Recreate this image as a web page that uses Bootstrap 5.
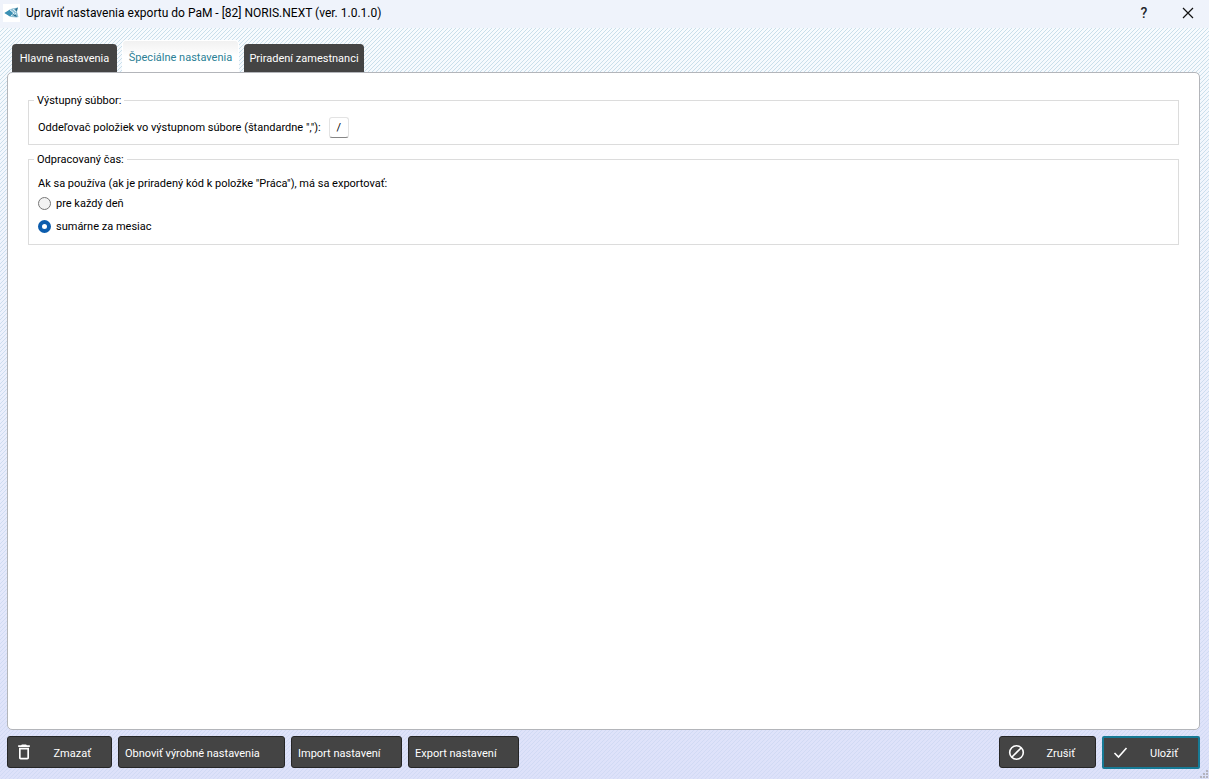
<!DOCTYPE html>
<html lang="sk">
<head>
<meta charset="utf-8">
<meta name="viewport" content="width=device-width, initial-scale=1">
<title>Upraviť nastavenia exportu do PaM</title>
<link href="https://cdn.jsdelivr.net/npm/bootstrap@5.3.0/dist/css/bootstrap.min.css" rel="stylesheet">
<style>
  body {
    font: 11px/16px Roboto, "Open Sans", sans-serif;
    color: #000;
    /* diagonal hatching over a pale vertical gradient */
    background:
      linear-gradient(to bottom, transparent, rgba(212, 216, 248, .75)),
      linear-gradient(135deg, #c9dfea 10%, #f8fcfe 11% 39%, #c9dfea 40% 60%, #f8fcfe 61% 89%, #c9dfea 90%) 0 0 / 4px 4px;
  }
  .title-bar { height: 28px; background: #eff3fb; font-size: 12px; padding: 0 12px 2px 3px; gap: 6px; }
  .title-btn { width: 18px; height: 18px; font-size: 14px; font-weight: 500; line-height: 18px; }
  .app-logo { background: #fff; }
  .dialog-body { padding: 0 9px 0 7px; }

  .nav-tabs { padding: 12px 5px 0; gap: 5px; border: 0; }
  .nav-tabs .nav-link {
    height: 28px; padding: 0; margin: 0; border: 0; border-radius: 4px 4px 0 0;
    background: #444; color: #fff; line-height: 30px; text-align: center;
  }
  .nav-tabs .nav-link.tab-main { width: 105px; }
  .nav-tabs .nav-link.tab-staff { width: 120px; }
  .nav-tabs .nav-link.active {
    width: 117px; height: 32px; color: #2b7f96; line-height: 34px;
    background: linear-gradient(#f1f1f1, #fff 50%); border: 1px solid #fff; border-bottom: 0;
  }

  .tab-panel { background: #fff; border: 1px solid #b3b5ba; border-radius: 5px; padding: 19px 20px; }
  .group-box { border: 1px solid #dcdcdc; padding: 0 9px 6px; min-width: 0; }
  .group-box > legend {
    float: none; width: auto; margin: 0 0 0 -4px; padding: 2px 3px 0;
    font-size: 11px; line-height: 14px;
  }
  .group-output { margin-bottom: 6px; }
  .group-body { padding-top: 9px; }
  .separator-input {
    width: 20px; height: 21px; padding: 0; font-size: 11px; text-align: center; color: #000;
    border: 1px solid #e3e3e3; border-bottom-color: #868686; border-radius: 3px;
  }
  .radio-row { height: 23px; gap: 5px; }
  .radio-row .form-check-input {
    width: 13px; height: 13px; margin: 0; border: 1px solid #777; background-color: #f3f3f3;
  }
  .radio-row .form-check-input:checked { border: 4px solid #0b5cad; background: #fff; }

  .action-bar { padding: 6px 0 10px; gap: 6px; }
  .btn-dark-flat {
    height: 32px; padding: 3px 20px 0 6px; font-size: 11px; line-height: 16px; border-radius: 3px;
    --bs-btn-color: #fff; --bs-btn-bg: #444; --bs-btn-border-color: #262626;
    --bs-btn-hover-color: #fff; --bs-btn-hover-bg: #555; --bs-btn-hover-border-color: #262626;
    display: flex; align-items: center; white-space: nowrap;
  }
  .btn-dark-flat svg { flex: none; margin-top: -3px; }
  .btn-w-export { width: 111px; }
  .btn-w-restore { width: 167px; }
  .btn-w-delete { width: 105px; }
  .btn-w-end { width: 97px; padding-left: 8px; }
  .btn-save { width: 98px; border: 2px solid #167a95; border-radius: 2px; height: 33px; }
  .size-grip { right: 0; bottom: 0; }
</style>
</head>
<body>
<div class="d-flex flex-column min-vh-100 position-relative">
  <header class="title-bar d-flex align-items-center">
    <svg class="app-logo" width="17" height="18" viewBox="0 0 17 18" aria-hidden="true">
      <path d="M1.500 9 9 4.500l6-1-1 4.500 1.500 5-2 .5L8 13z" fill="#8fbfd3"/>
      <path d="M1.500 9 7 5.500l3 3.500-3 3.500z" fill="#3a90b4"/>
      <path d="M7 6l4 3-3 3M10 5l3 3M10 12l3-3" stroke="#d6ecf3" fill="none"/>
      <path d="M12 5l3-1.500-1.500 4zM9 10l4 1 1 2-3-1z" fill="#256d8e"/>
    </svg>
    <span class="flex-grow-1">Upraviť nastavenia exportu do PaM - [82] NORIS.NEXT (ver. 1.0.1.0)</span>
    <button type="button" class="title-btn btn p-0 border-0 me-3" aria-label="Pomocník">?</button>
    <button type="button" class="title-btn btn p-0 border-0 ms-1 d-flex align-items-center justify-content-center" aria-label="Zavrieť">
      <svg width="12" height="12" viewBox="0 0 12 12"><path d="M1 1l10 10M11 1 1 11" stroke="#111" stroke-width="1.200"/></svg>
    </button>
  </header>

  <main class="dialog-body d-flex flex-column flex-grow-1">
    <ul class="nav nav-tabs align-items-end flex-nowrap" role="tablist">
      <li class="nav-item"><button type="button" class="nav-link tab-main text-nowrap" role="tab">Hlavné nastavenia</button></li>
      <li class="nav-item"><button type="button" class="nav-link active text-nowrap" role="tab" aria-selected="true">Špeciálne nastavenia</button></li>
      <li class="nav-item"><button type="button" class="nav-link tab-staff text-nowrap" role="tab">Priradení zamestnanci</button></li>
    </ul>

    <section class="tab-panel flex-grow-1">
      <fieldset class="group-box group-output">
        <legend>Výstupný súbbor:</legend>
        <div class="group-body d-flex align-items-center gap-2">
          <label for="separator">Oddeľovač položiek vo výstupnom súbore (štandardne ","):</label>
          <input id="separator" class="separator-input" type="text" value="/" maxlength="1">
        </div>
      </fieldset>
      <fieldset class="group-box">
        <legend>Odpracovaný čas:</legend>
        <p class="group-body mb-0">Ak sa používa (ak je priradený kód k položke "Práca"), má sa exportovať:</p>
        <div class="radio-row d-flex align-items-center">
          <input class="form-check-input" type="radio" name="period" id="daily">
          <label for="daily">pre každý deň</label>
        </div>
        <div class="radio-row d-flex align-items-center">
          <input class="form-check-input" type="radio" name="period" id="monthly" checked>
          <label for="monthly">sumárne za mesiac</label>
        </div>
      </fieldset>
    </section>

    <footer class="action-bar d-flex">
      <button type="button" class="btn btn-dark-flat btn-w-delete justify-content-between">
        <svg width="20" height="20" viewBox="0 0 24 24" fill="#fff" aria-hidden="true"><path fill-rule="evenodd" d="M6 19c0 1.100.9 2 2 2h8c1.100 0 2-.9 2-2V7H6zM8 9h8v10H8zm7.500-5-1-1h-5l-1 1H5v2h14V4z"/></svg>
        <span>Zmazať</span>
      </button>
      <button type="button" class="btn btn-dark-flat btn-w-restore">Obnoviť výrobné nastavenia</button>
      <button type="button" class="btn btn-dark-flat btn-w-export">Import nastavení</button>
      <button type="button" class="btn btn-dark-flat btn-w-export">Export nastavení</button>
      <button type="button" class="btn btn-dark-flat btn-w-end justify-content-between ms-auto">
        <svg width="17" height="17" viewBox="0 0 17 17" fill="none" stroke="#fff" stroke-width="1.600" aria-hidden="true"><circle cx="8.500" cy="8.500" r="6.800"/><path d="M13.300 3.700 3.700 13.300"/></svg>
        <span>Zrušiť</span>
      </button>
      <button type="submit" class="btn btn-dark-flat btn-w-end btn-save justify-content-between">
        <svg width="17" height="17" viewBox="0 0 17 17" fill="none" stroke="#fff" stroke-width="1.600" aria-hidden="true"><path d="M2.500 9l4 4L14.500 4"/></svg>
        <span>Uložiť</span>
      </button>
    </footer>
  </main>
  <svg class="size-grip position-absolute" width="9" height="9" viewBox="0 0 9 9" fill="#b4b4be" aria-hidden="true"><path d="M6 0h2v2H6zM3 3h2v2H3zM6 3h2v2H6zM0 6h2v2H0zM3 6h2v2H3zM6 6h2v2H6z"/></svg>
</div>
<script src="https://cdn.jsdelivr.net/npm/bootstrap@5.3.0/dist/js/bootstrap.bundle.min.js"></script>
</body>
</html>
